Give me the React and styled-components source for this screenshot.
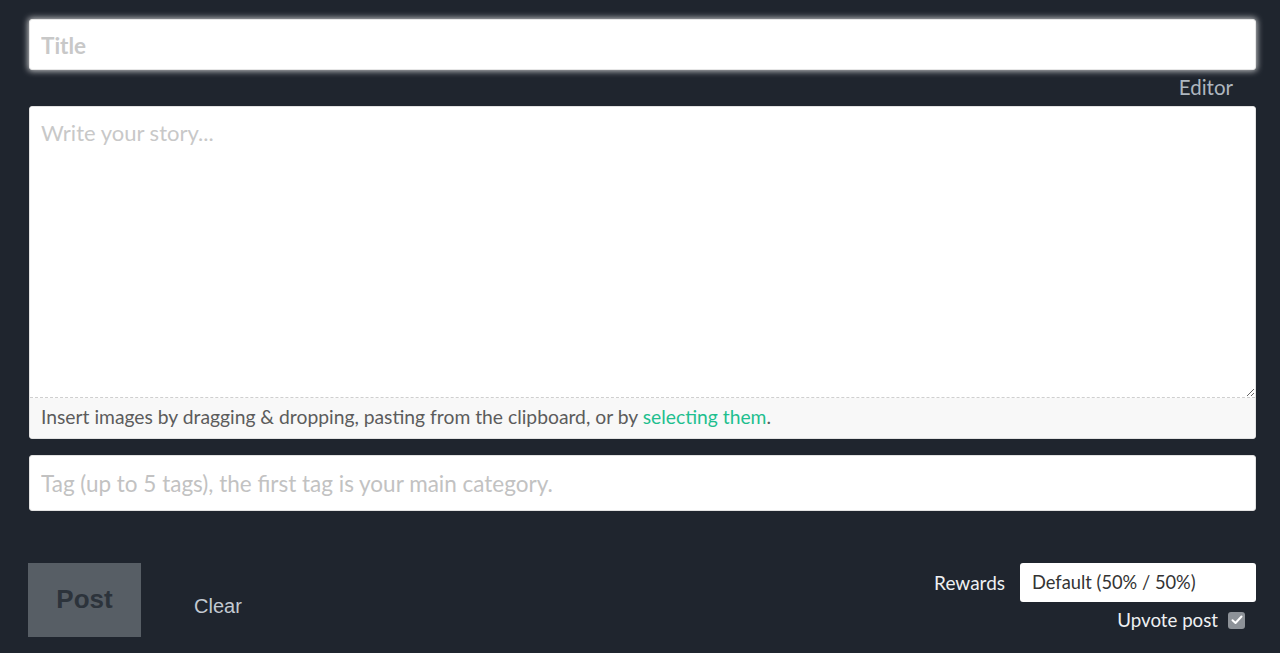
import styled, { createGlobalStyle } from "styled-components";

const Global = createGlobalStyle`
  html, body {
    margin: 0;
    background: #1f252e;
  }
  body {
    font-family: Lato, "Noto Sans", sans-serif;
  }
  * { box-sizing: border-box; }
`;

const Page = styled.div`
  padding: 19px 24px 0 29px;
  height: 653px;
`;

const TitleInput = styled.input`
  display: block;
  width: 100%;
  height: 51px;
  border: 1px solid #e6e6e6;
  border-radius: 3px;
  background: #fff;
  box-shadow: 0 0 6px 1px rgba(255, 255, 255, 0.75);
  padding: 2px 11px 0;
  font-family: inherit;
  font-size: 22.5px;
  font-weight: 700;
  color: #333;
  outline: none;
  &::placeholder { color: #c8c8c8; }
`;

const EditorToggle = styled.div`
  text-align: right;
  padding-right: 23px;
  height: 36px;
  line-height: 34px;
  font-size: 20.5px;
  color: #aeb6bf;
`;

const EditorBox = styled.div`
  border: 1px solid #e2e2e2;
  border-radius: 3px;
  background: #fff;
  overflow: hidden;
`;

const StoryArea = styled.textarea`
  display: block;
  width: 100%;
  height: 291px;
  border: none;
  border-bottom: 1px dashed #cfcfcf;
  padding: 12px 11px;
  font-family: inherit;
  font-size: 22px;
  color: #333;
  resize: vertical;
  outline: none;
  &::placeholder { color: #c8c8c8; }
`;

const DropHint = styled.div`
  background: #f8f8f8;
  height: 40px;
  padding: 0 11px;
  line-height: 38px;
  font-size: 19.3px;
  color: #5c5c5c;
`;

const Link = styled.a`
  color: #1fbf8f;
  text-decoration: none;
`;

const TagInput = styled.input`
  display: block;
  width: 100%;
  height: 56px;
  margin-top: 16px;
  border: 1px solid #e2e2e2;
  border-radius: 3px;
  background: #fff;
  padding: 0 11px;
  font-family: inherit;
  font-size: 22.5px;
  color: #333;
  outline: none;
  &::placeholder { color: #c2c2c2; }
`;

const Footer = styled.div`
  display: flex;
  justify-content: space-between;
  align-items: flex-start;
  margin-top: 52px;
`;

const Actions = styled.div`
  display: flex;
  align-items: center;
`;

const PostButton = styled.button`
  width: 113px;
  height: 74px;
  margin-left: -1px;
  border: none;
  background: #575e65;
  color: #2c333b;
  font-family: "Liberation Sans", Arial, sans-serif;
  font-size: 26px;
  font-weight: 700;
  padding-bottom: 2px;
`;

const ClearButton = styled.button`
  margin-left: 53px;
  margin-top: 12px;
  border: none;
  background: none;
  padding: 0;
  color: #c3cad2;
  font-family: "Liberation Sans", Arial, sans-serif;
  font-size: 20px;
`;

const Options = styled.div`
  display: flex;
  flex-direction: column;
  align-items: flex-end;
`;

const RewardsRow = styled.label`
  display: flex;
  align-items: center;
  gap: 15px;
  font-size: 19px;
  color: #eef0f2;
`;

const Select = styled.div`
  width: 236px;
  height: 39px;
  background: #fff;
  border-radius: 3px;
  padding: 0 12px;
  line-height: 38px;
  font-size: 18.3px;
  color: #333;
`;

const UpvoteRow = styled.label`
  display: flex;
  align-items: center;
  gap: 10px;
  margin-top: 7px;
  margin-right: 11px;
  font-size: 18.7px;
  color: #eef0f2;
`;

const Check = styled.span`
  width: 17px;
  height: 17px;
  border-radius: 3px;
  background: #8d9298;
  display: flex;
  align-items: center;
  justify-content: center;
`;

export default function App() {
  return (
    <>
      <Global />
      <Page>
        <TitleInput placeholder="Title" />
        <EditorToggle>Editor</EditorToggle>
        <EditorBox>
          <StoryArea placeholder="Write your story..." />
          <DropHint>
            Insert images by dragging &amp; dropping, pasting from the clipboard, or by{" "}
            <Link href="#">selecting them</Link>.
          </DropHint>
        </EditorBox>
        <TagInput placeholder="Tag (up to 5 tags), the first tag is your main category." />
        <Footer>
          <Actions>
            <PostButton>Post</PostButton>
            <ClearButton>Clear</ClearButton>
          </Actions>
          <Options>
            <RewardsRow>
              Rewards
              <Select>Default (50% / 50%)</Select>
            </RewardsRow>
            <UpvoteRow>
              Upvote post
              <Check>
                <svg width="12" height="10" viewBox="0 0 12 10">
                  <path d="M1.5 5.2 L4.5 8 L10.5 1.5" fill="none" stroke="#fff" strokeWidth="2" strokeLinecap="round" strokeLinejoin="round" />
                </svg>
              </Check>
            </UpvoteRow>
          </Options>
        </Footer>
      </Page>
    </>
  );
}
